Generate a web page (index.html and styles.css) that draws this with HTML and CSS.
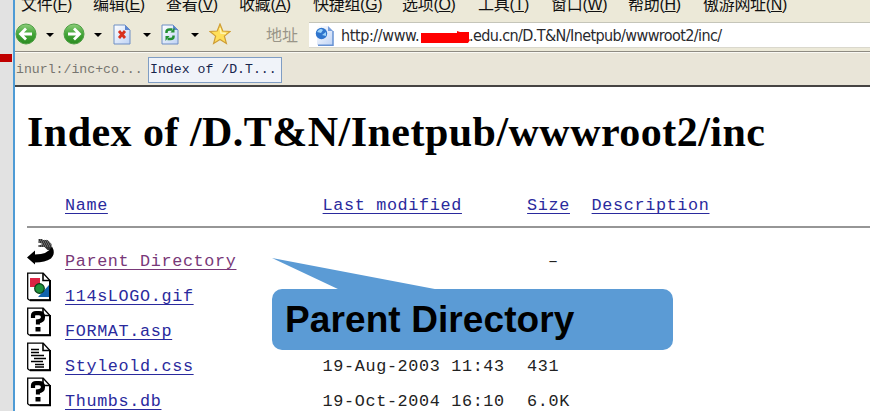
FILE: index.html
```html
<!DOCTYPE html>
<html lang="zh-CN">
<head>
<meta charset="utf-8">
<title>Index of /D.T&amp;N/Inetpub/wwwroot2/inc</title>
<link rel="stylesheet" href="styles.css">
</head>
<body>
<svg width="0" height="0" class="defs">
  <defs>
    <linearGradient id="green" x1="0" y1="0" x2="0" y2="1"><stop offset="0" stop-color="#8fce7c"/><stop offset=".5" stop-color="#42a536"/><stop offset="1" stop-color="#2c8b22"/></linearGradient>
    <linearGradient id="paper" x1="0" y1="0" x2="1" y2="1"><stop offset="0" stop-color="#fff"/><stop offset="1" stop-color="#bfd3f5"/></linearGradient>
    <symbol id="sheet" viewBox="0 0 18 21"><path d="M1 1h11l5 5v14H1z" fill="url(#paper)" stroke="#6f8fc4"/><path d="M12 1v5h5z" fill="#5f87cf"/></symbol>
    <symbol id="page" viewBox="0 0 26 30"><path d="M.7 1.200h15.500l6.500 7v20H2.500l-1.800-1.500z" fill="#fff" stroke="#000" stroke-width="1.300"/><path d="M16 1v7.500h7" fill="none" stroke="#000" stroke-width="1.600"/><path d="M23 8v20.300H3" fill="none" stroke="#000" stroke-width="2"/></symbol>
    <symbol id="unknown" viewBox="0 0 26 30"><use href="#page"/><path d="M6 11V8.500q0-2.300 3-2.300h3q4 0 4 3.800t-5 4.300v3.200" fill="none" stroke="#000" stroke-width="4.200"/><path d="M8.500 20h5v4.500h-5z"/></symbol>
  </defs>
</svg>
<div class="slide">
  <aside class="edge"><div class="mark"></div></aside>
  <div class="browser">
    <nav class="menu">
      <span>文件(<u>F</u>)</span><span>编辑(<u>E</u>)</span><span>查看(<u>V</u>)</span><span>收藏(<u>A</u>)</span><span>快捷组(<u>G</u>)</span><span>选项(<u>O</u>)</span><span>工具(<u>T</u>)</span><span>窗口(<u>W</u>)</span><span>帮助(<u>H</u>)</span><span>傲游网址(<u>N</u>)</span>
    </nav>
    <div class="toolbar">
      <div class="tool"><svg width="22" height="22" viewBox="0 0 22 22"><circle cx="11" cy="11" r="10" fill="url(#green)" stroke="#4f9f45"/><path d="M17 11H6M11 5.500L5.500 11l5.500 5.500" fill="none" stroke="#fff" stroke-width="2.800"/></svg><i></i></div>
      <div class="tool"><svg width="22" height="22" viewBox="0 0 22 22"><circle cx="11" cy="11" r="10" fill="url(#green)" stroke="#4f9f45"/><path d="M5 11h11M11 5.500l5.500 5.500-5.500 5.500" fill="none" stroke="#fff" stroke-width="2.800"/></svg><i></i></div>
      <div class="tool"><svg width="22" height="22" viewBox="0 0 22 22"><use href="#sheet" x="1" y="1" width="18" height="21"/><path d="M7 8l6 7M13 8l-6 7" stroke="#d9301c" stroke-width="2.800"/></svg><i></i></div>
      <div class="tool"><svg width="22" height="22" viewBox="0 0 22 22"><use href="#sheet" x="1" y="1" width="18" height="21"/><path d="M6.500 10V9q0-2.500 3-2.500h3M13.500 12.500v1q0 2.500-3 2.500h-3" fill="none" stroke="#239032" stroke-width="2.500"/><path d="M10.500 9.500l4-5v5zM9.500 13l-4 5v-5z" fill="#239032"/></svg><i></i></div>
      <div class="tool"><svg width="22" height="22" viewBox="0 0 22 22"><path d="M11 1l2.800 7 7.200.5-5.600 4.600 2 7.400L11 16.500l-6.400 4 2-7.400L1 8.500l7.200-.5z" fill="#ffdf5a" stroke="#cf9d35" stroke-width="1.200"/><path d="M11 5l1 5 5 .5" fill="none" stroke="#fff5b4" stroke-width="1.500"/></svg></div>
      <span class="addr-label">地址</span>
      <div class="address">
        <svg width="20" height="22" viewBox="0 0 20 22"><path d="M3 1h11l5 5v14H3z" fill="url(#paper)"/><path d="M19 6v14.300H4" fill="none" stroke="#6792d3" stroke-width="1.500"/><path d="M14 1v5h5z" fill="#779edb"/><circle cx="7.500" cy="8.500" r="5.700" fill="#2f75cd"/><path d="M3 7q3-5 6-2l-2 3zM8 10l4-3v4z" fill="#9bd2fa"/></svg>
        <span class="url-a">http://www.</span><svg class="redact" width="51" height="14" viewBox="0 0 51 14"><path d="M1 3h36V1l3 1h9v7l1 1-2 3H1z" fill="#f00"/></svg><span class="url-b">.edu.cn/D.T&amp;N/Inetpub/wwwroot2/inc/</span>
      </div>
    </div>
    <div class="tabs"><span class="tab">inurl:/inc+co...</span><span class="tab active">Index of /D.T...</span></div>
    <main class="content">
      <h1>Index of /D.T&amp;N/Inetpub/wwwroot2/inc</h1>
      <div class="row head"><span></span><a>Name</a><a>Last modified</a><a>Size</a><a>Description</a></div>
      <div class="row"><svg width="28" height="30" viewBox="0 0 28 30"><path d="M11.500 2h4v1h5l4 4v6h-4l-3-3h-6V8h3V6h-3z" fill="#333"/><path d="M11 3h9M12 5h11M13 7h11M12 9h12" stroke="#bbb" stroke-width=".7" stroke-dasharray="1 1"/><path d="M0 20.500l8-7v4q13 0 17-8 4 7-1 12-6 4-16 4v2z"/></svg><a class="visited">Parent Directory</a><span></span><span class="dash">–</span></div>
      <div class="row"><svg width="26" height="30" viewBox="0 0 26 30"><use href="#page"/><path d="M3 6h10v9H3z" fill="#dc2444"/><path d="M22 13v12H11z" fill="#1263ad"/><circle cx="12.500" cy="16.500" r="4.800" fill="#20913b" stroke="#063b17" stroke-width="1.200"/></svg><a>114sLOGO.gif</a></div>
      <div class="row"><svg width="26" height="30"><use href="#unknown"/></svg><a>FORMAT.asp</a></div>
      <div class="row"><svg width="26" height="30" viewBox="0 0 26 30"><use href="#page"/><path d="M4 7.500h8M4 10.500h8M4 13.500h13M7 16.500h12M4 19.500h12M8 22.500h9M8 25h9" stroke="#000" stroke-width="1.300"/></svg><a>Styleold.css</a><span>19-Aug-2003 11:43</span><span>431</span></div>
      <div class="row"><svg width="26" height="30"><use href="#unknown"/></svg><a>Thumbs.db</a><span>19-Oct-2004 16:10</span><span>6.0K</span></div>
    </main>
  </div>
  <div class="callout"><svg width="170" height="33" viewBox="0 0 170 33"><path d="M0 0L168 32H68z" fill="#5b9bd5"/></svg><div class="bubble">Parent Directory</div></div>
</div>
</body>
</html>
```
FILE: styles.css
```css
* { box-sizing: border-box; }
body { margin: 0; background: #fff; }
.defs { position: absolute; }
.slide { position: relative; display: flex; width: 870px; height: 411px; overflow: hidden; }
.edge { flex: none; width: 13px; background: #e2e2e2; padding-top: 54px; }
.mark { width: 12px; height: 8px; background: #c00000; }
.browser { flex: none; width: 857px; height: 411px; border-left: 2px solid #4e9bd5; overflow: hidden; }
.menu { display: grid; grid-template-columns: 72px 73px 73px 74px 89px 76px 73px 77px 75px 1fr; height: 22px; padding-left: 6px; background: #ece9d8; font: 16px/20px "Liberation Sans", "Noto Sans CJK SC", sans-serif; letter-spacing: -.3px; color: #111; white-space: nowrap; }
.menu span { margin-top: -5px; }
.menu u { text-underline-offset: 1px; }
.toolbar { display: flex; height: 30px; background: #ece9d8; border-bottom: 1px solid #8e8b82; }
.tool { flex: none; display: flex; width: 48.400px; gap: 9px; padding-top: 1px; }
.tool i { width: 0; height: 0; margin-top: 10px; border: 4px solid transparent; border-top: 4px solid #000; border-bottom: 0; }
.addr-label { flex: none; width: 42px; margin-left: 9px; padding-top: 1px; font: 16px/23px "Noto Sans CJK SC", sans-serif; color: #999588; white-space: nowrap; }
.address { display: flex; flex: 1; height: 26px; margin-left: 1px; padding: 2px 0 0 5px; background: #fff; border-top: 1px solid #c5c5b9; border-bottom: 1px solid #dad8cd; font: 16px/22px "DejaVu Sans Condensed", sans-serif; color: #29292d; white-space: nowrap; }
.url-a { flex: none; width: 79px; margin-left: 7px; letter-spacing: -.4px; }
.redact { flex: none; margin-top: 5px; }
.url-b { letter-spacing: -.6px; margin-left: -2px; }
.tabs { display: flex; height: 35px; padding-top: 4px; background: #e9e5d8; border-top: 1px solid #faf9f4; border-bottom: 2px solid #464442; font: 13.200px/24px "Liberation Mono", monospace; }
.tab { width: 133px; height: 26px; padding: 1px 0 0 1px; color: #77756f; white-space: nowrap; }
.active { width: 134px; border: 1px solid #7f9dc4; background: #f0f3f9; color: #17254d; padding-top: 0; }
.content { padding-left: 12px; }
h1 { height: 100px; margin: 0; padding-top: 20px; font: bold 42px/50px "Liberation Serif", serif; letter-spacing: .47px; white-space: nowrap; color: #000; }
.row { display: grid; grid-template-columns: 38px 257.600px 204.500px 64.500px 1fr; height: 35px; font: 16.800px/21px "Liberation Mono", monospace; letter-spacing: .648px; color: #222; white-space: nowrap; }
.row > svg { margin-left: -.5px; margin-top: -.5px; }
.row > a, .row > span { justify-self: start; padding-top: 14px; }
.row a { color: #2a2a9d; text-decoration: underline; text-decoration-thickness: 1px; text-underline-offset: 3px; }
.row a.visited { color: #783878; }
.row .dash { padding-left: 21px; }
.row.head { height: 41px; margin-bottom: 9px; border-bottom: 2px solid #969696; }
.row.head > a { padding-top: 8px; }
.callout { position: absolute; left: 272px; top: 258px; width: 401px; height: 92px; }
.callout svg { display: block; height: 32px; margin-bottom: -1px; }
.callout svg { width: 170px; height: 33px; margin-bottom: -2px; }
.bubble { height: 61px; padding-left: 13px; border-radius: 10px; background: #5b9bd5; color: #000; font: bold 37px/62px "Liberation Sans", sans-serif; letter-spacing: .1px; white-space: nowrap; }
```
